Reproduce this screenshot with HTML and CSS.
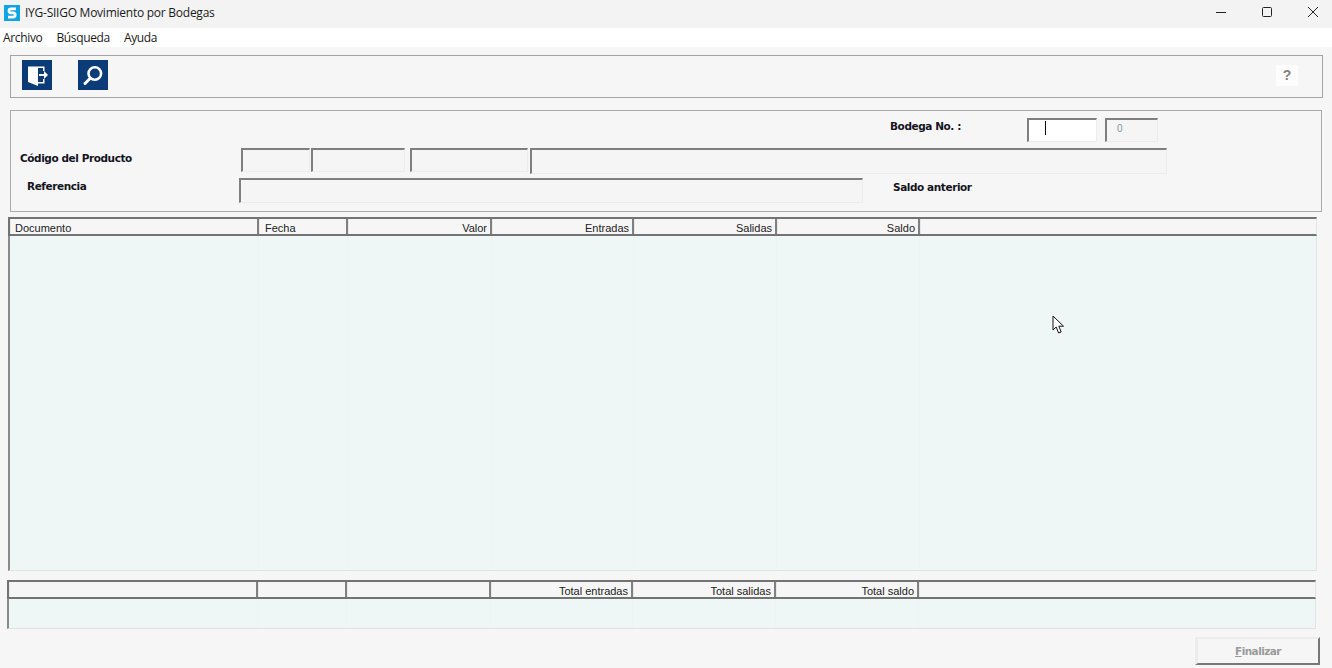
FILE: index.html
```html
<!DOCTYPE html>
<html lang="es">
<head>
<meta charset="utf-8">
<title>IYG-SIIGO Movimiento por Bodegas</title>
<link rel="stylesheet" href="styles.css">
</head>
<body>
<header class="titlebar">
  <svg class="app-icon" width="16" height="16" viewBox="0 0 16 16"><rect width="16" height="16" fill="#0ea5e4"/><path d="M12 3.8H7a2 2 0 0 0 0 4h2a2.2 2.2 0 0 1 0 4.4H4" fill="none" stroke="#fff" stroke-width="2.8"/></svg>
  <span class="title">IYG-SIIGO Movimiento por Bodegas</span>
  <div class="win-controls">
    <svg width="12" height="12" viewBox="0 0 12 12"><path d="M1 6.5H11" stroke="#222" fill="none"/></svg>
    <svg width="12" height="12" viewBox="0 0 12 12"><rect x="1.5" y="1.5" width="9" height="9" rx="1" stroke="#222" fill="none"/></svg>
    <svg width="12" height="12" viewBox="0 0 12 12"><path d="M1 1L11 11M11 1L1 11" stroke="#222" fill="none"/></svg>
  </div>
</header>
<nav class="menubar"><span>Archivo</span><span>Búsqueda</span><span>Ayuda</span></nav>
<main class="content">
  <section class="toolbar">
    <button class="tool">
      <svg width="30" height="30" viewBox="0 0 30 30"><rect width="30" height="30" fill="#0b3c78"/><path d="M6 6.5H16V26L6 22Z" fill="#fff"/><path d="M16 6.5H22.5V11H21V8H16ZM21 19H22.5V23.5H16V22H21Z" fill="#fff"/><path d="M17 14H22V11L26 15L22 19V16H17Z" fill="#fff"/></svg>
    </button>
    <button class="tool">
      <svg width="30" height="30" viewBox="0 0 30 30"><rect width="30" height="30" fill="#0b3c78"/><circle cx="16.8" cy="13.5" r="6.3" fill="none" stroke="#fff" stroke-width="2.6"/><path d="M12 18.5L7 23.5" stroke="#fff" stroke-width="3" stroke-linecap="round"/></svg>
    </button>
    <button class="help">?</button>
  </section>
  <section class="form">
    <div class="row row-bodega">
      <label class="lbl lbl-bodega">Bodega No. :</label>
      <div class="field field-b1 active"><i class="caret"></i></div>
      <div class="field field-b2">0</div>
    </div>
    <div class="row row-code">
      <label class="lbl lbl-code">Código del Producto</label>
      <div class="field f1"></div>
      <div class="field f2"></div>
      <div class="field f3"></div>
      <div class="field f4"></div>
    </div>
    <div class="row row-ref">
      <label class="lbl lbl-ref">Referencia</label>
      <div class="field f-ref"></div>
      <label class="lbl lbl-saldo">Saldo anterior</label>
    </div>
  </section>
  <section class="grid grid-main">
    <div class="grid-head">
      <div class="th">Documento</div><div class="th">Fecha</div><div class="th right">Valor</div><div class="th right">Entradas</div><div class="th right">Salidas</div><div class="th right">Saldo</div><div class="th last"></div>
    </div>
    <div class="grid-body"><i></i><i></i><i></i><i></i><i></i><i></i><i></i></div>
  </section>
  <section class="grid grid-total">
    <div class="grid-head">
      <div class="th"></div><div class="th"></div><div class="th"></div><div class="th right">Total entradas</div><div class="th right">Total salidas</div><div class="th right">Total saldo</div><div class="th last"></div>
    </div>
    <div class="grid-body"><i></i><i></i><i></i><i></i><i></i><i></i><i></i></div>
  </section>
  <footer class="actions"><button class="finish"><u>F</u>inalizar</button></footer>
</main>
<svg class="pointer" width="13" height="20" viewBox="0 0 13 20"><path d="M1 1V15L4.2 12L6.6 18L9.2 17L6.8 11.2H11.5Z" fill="#fff" stroke="#111" stroke-width="1"/></svg>
</body>
</html>
```
FILE: styles.css
```css
* { box-sizing: border-box; }
html, body { margin: 0; height: 668px; overflow: hidden; }
body { background: #f6f6f6; font-family: "Liberation Sans", Arial, sans-serif; color: #111; position: relative; }

.titlebar { height: 28px; background: #f3f3f3; display: flex; align-items: center; padding-left: 4px; }
.app-icon { margin-right: 5px; margin-top: -3px; }
.title { font: 12px/16px "Open Sans", sans-serif; letter-spacing: -0.25px; color: #1a1a1a; margin-top: -3px; }
.win-controls { margin-left: auto; display: flex; gap: 34px; margin-right: 13px; margin-top: -4px; }
.win-controls svg { display: block; }

.menubar { height: 19px; background: #fff; display: flex; padding-left: 3px; gap: 14px; font: 12px/20px "Open Sans", sans-serif; letter-spacing: -0.35px; color: #1a1a1a; }

.content { display: block; padding: 8px 0 0; }

.toolbar { margin-left: 10px; width: 1313px; height: 43px; border: 1px solid #a3a3a3; display: flex; align-items: flex-start; padding: 4px 24px 0 11px; gap: 26px; }
.tool { width: 30px; height: 30px; padding: 0; border: 0; background: none; display: block; }
.tool svg { display: block; }
.help { margin-left: auto; margin-top: 5px; width: 22px; height: 21px; padding: 0; border: 0; background: #fdfdfd; color: #808080; font: bold 14px/21px "Liberation Sans", sans-serif; }

.form { margin: 12px 0 0 10px; width: 1312px; height: 102px; border: 1px solid #ababab; padding-top: 7px; }
.row { display: flex; align-items: center; }
.row-bodega { height: 24px; }
.row-code { height: 26px; margin-top: 6px; }
.row-ref { height: 25px; margin-top: 4px; }
.lbl { font: bold 10.5px/14px "DejaVu Sans", sans-serif; letter-spacing: -0.42px; color: #14141e; white-space: nowrap; }
.lbl-bodega { margin-left: 879px; width: 137px; margin-top: -8px; }
.lbl-code { margin-left: 9px; width: 221px; margin-top: -6px; }
.lbl-ref { margin-left: 16px; width: 212px; margin-top: -10px; }
.lbl-saldo { margin-left: 30px; margin-top: -8px; }

.field { height: 100%; background: #f5f5f5; border-style: solid; border-width: 2px 1px 1px 2px; border-color: #7f7f7f #ececec #ececec #7f7f7f; font: 10px/18px "Liberation Sans", sans-serif; color: #7d95ad; }
.field-b1 { width: 70px; background: #fff; padding-left: 16px; }
.field-b2 { width: 53px; margin-left: 8px; padding-left: 10px; }
.caret { display: block; width: 1px; height: 14px; background: #000; margin-top: 1px; }
.f1, .f2, .f3 { height: 24px; align-self: flex-start; }
.f1 { width: 69px; }
.f2 { width: 94px; margin-left: 1px; }
.f3 { width: 118px; margin-left: 5px; }
.f4 { width: 637px; margin-left: 2px; }
.f-ref { width: 624px; }

.grid { display: block; }
.grid-main { margin: 5px 0 0 8px; width: 1309px; height: 354px; }
.grid-total { margin: 9px 0 0 7px; width: 1309px; height: 49px; }
.grid-head, .grid-body { display: grid; grid-template-columns: 249px 89px 144px 142px 143px 143px 1fr; }
.grid-head { height: 19px; border-top: 2px solid #737373; border-left: 2px solid #737373; border-bottom: 2px solid #737373; border-right: 1px solid #e4e4e4; }
.th { font: 11px/15px "Liberation Sans", sans-serif; color: #222; padding: 2px 3px 0 5px; border-right: 2px solid #808080; border-left: 1px solid #e8e8e8; white-space: nowrap; overflow: hidden; height: 15px; background: #f6f6f6; }
.th:first-child { padding-left: 4px; }
.th.right { text-align: right; }
.th.last { border-right: 0; }
.grid-body { height: calc(100% - 19px); background: #eff7f6; border-left: 2px solid #8a8a8a; border-bottom: 1px solid #e2e2e2; border-right: 1px solid #e4e4e4; }
.grid-body i { border-right: 1px dotted #e9f0ef; }
.grid-body i:last-child { border-right: 0; }

.actions { display: flex; justify-content: flex-end; padding: 8px 12px 0 0; }
.finish { width: 125px; height: 28px; padding: 0; background: #f6f6f6; border-style: solid; border-width: 2px 2px 2px 3px; border-color: #ececec #777 #777 #ececec; color: #9a9a9a; font: bold 10.5px/20px "DejaVu Sans", sans-serif; letter-spacing: -0.55px; }

.pointer { position: absolute; left: 1052px; top: 315px; }
```
